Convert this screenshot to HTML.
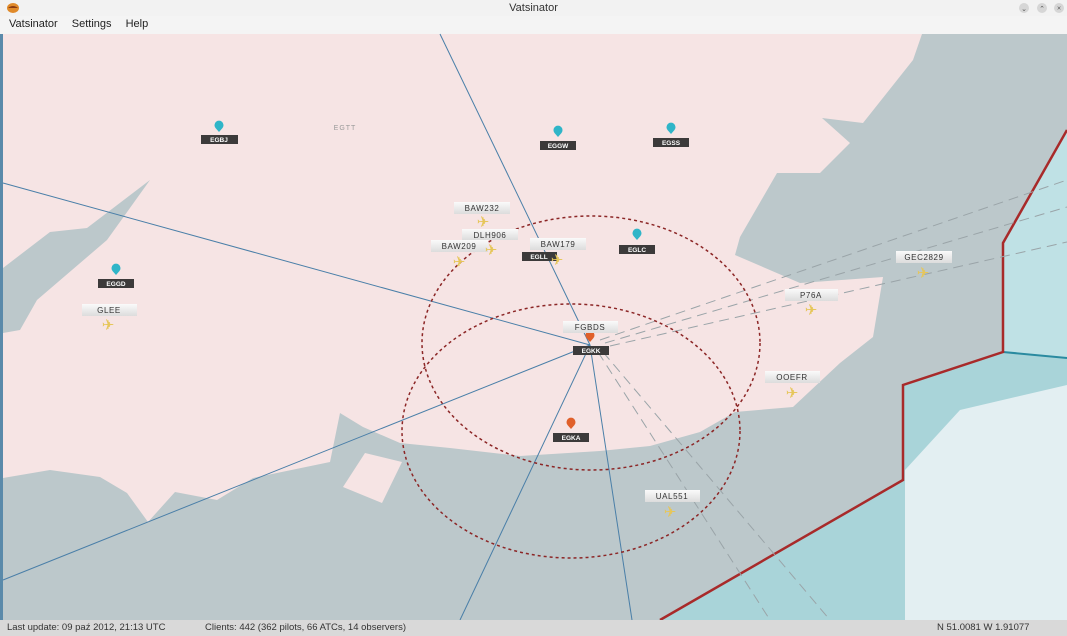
<!DOCTYPE html>
<html><head><meta charset="utf-8"><style>
html,body{margin:0;padding:0;width:1067px;height:636px;overflow:hidden;font-family:"Liberation Sans",sans-serif;background:#f0f0f0}
.title{position:absolute;left:0;top:0;width:1067px;height:16px;background:#f2f2f2;font-size:11px;color:#333;text-align:center;line-height:16px}
.menu{position:absolute;left:0;top:16px;width:1067px;height:18px;background:#f4f4f4;font-size:11px;color:#222;line-height:17px;border-bottom:1px solid #ddd}
.menu span{margin-left:9px;margin-right:2px}
.status{position:absolute;left:0;top:620px;width:1067px;height:16px;background:#d9d9d9;font-size:9.5px;color:#333;line-height:16px}
.status span{position:absolute;top:0}
svg{position:absolute;left:0;top:0}
</style></head><body>
<div class="title">Vatsinator</div>
<div class="menu"><span>Vatsinator</span> <span>Settings</span> <span>Help</span></div>
<svg width="1067" height="636" viewBox="0 0 1067 636" xmlns="http://www.w3.org/2000/svg" font-family="Liberation Sans, sans-serif">
<defs>
<linearGradient id="lg" x1="0" y1="0" x2="0" y2="1"><stop offset="0" stop-color="#fafafa"/><stop offset="1" stop-color="#dcdcdc"/></linearGradient>
<path id="pin" d="M0,5 L-3.5,1 A4.5,4.5 0 1 1 3.5,1 Z"/>
</defs>
<ellipse cx="13" cy="8" rx="6" ry="5" fill="#e08a2a"/><path d="M8 8 Q13 4 18 8" fill="#8a3a10"/>
<g fill="#d6d6d6"><circle cx="1024" cy="8" r="5"/><circle cx="1042" cy="8" r="5"/><circle cx="1059" cy="8" r="5"/></g>
<g font-size="7" fill="#555" text-anchor="middle"><text x="1024" y="11">⌄</text><text x="1042" y="11">⌃</text><text x="1059" y="10.5">×</text></g>
<rect x="0" y="34" width="1067" height="586" fill="#f6e4e4"/>
<path d="M922,34 L1067,34 L1067,620 L0,620 L3,478 L50,470 L100,477 L127,493 L148,522 L175,492 L217,500 L253,478 L330,462 L340,413 L363,427 L400,443 L450,448 L520,456 L600,451 L650,446 L700,432 L735,412 L793,407 L840,363 L873,337 L883,277 L800,283 L735,255 L740,237 L777,173 L820,173 L850,143 L822,118 L863,123 L913,60 Z" fill="#bcc8cb"/>
<path d="M343,487 L365,453 L402,462 L382,503 Z" fill="#f6e4e4"/>
<path d="M3,268 L50,232 L87,228 L150,180 L107,240 L37,300 L20,330 L3,333 Z" fill="#bcc8cb"/>
<path d="M1067,130 L1003,243 L1003,352 L903,385 L903,480 L660,620 L1067,620 Z" fill="#a9d4d9"/>
<path d="M1067,130 L1003,243 L1003,352 L1067,358 Z" fill="#bfe1e5"/>
<path d="M905,470 L960,410 L1067,385 L1067,620 L905,620 Z" fill="#e3eff2"/>
<path d="M1003,352 L1067,358" stroke="#2a8aa0" stroke-width="2"/>
<path d="M1067,130 L1003,243 L1003,352 L903,385 L903,480 L660,620" fill="none" stroke="#a82a2a" stroke-width="2.5"/>
<rect x="0" y="34" width="3" height="586" fill="#5a8aaa"/>
<g stroke="#4a7fa8" stroke-width="1" fill="none">
<path d="M440,34 L590,345"/><path d="M3,183 L590,345"/><path d="M3,580 L590,345"/><path d="M590,345 L460,620"/><path d="M590,345 L632,620"/>
</g>
<g stroke="#9aa4a8" stroke-width="1" fill="none" stroke-dasharray="10,6">
<path d="M600,340 L1067,180"/><path d="M605,343 L1067,207"/><path d="M610,346 L1067,242"/>
<path d="M598,352 L770,620"/><path d="M603,352 L830,620"/>
</g>
<g stroke="#8c2626" stroke-width="1.5" fill="none" stroke-dasharray="3,3">
<ellipse cx="591" cy="343" rx="169" ry="127"/>
<ellipse cx="571" cy="431" rx="169" ry="127"/>
</g>
<text x="345" y="130" font-size="7" fill="#9a9a9a" text-anchor="middle" letter-spacing="1">EGTT</text>
<g font-size="6.5" fill="#fff" text-anchor="middle" font-weight="bold">
<g><use href="#pin" x="219" y="127" fill="#2fb5c8"/><rect x="201" y="135" width="37" height="9" fill="#3c3a3a"/><text x="219" y="142">EGBJ</text></g>
<g><use href="#pin" x="116" y="270" fill="#2fb5c8"/><rect x="98" y="279" width="36" height="9" fill="#3c3a3a"/><text x="116" y="286">EGGD</text></g>
<g><use href="#pin" x="558" y="132" fill="#2fb5c8"/><rect x="540" y="141" width="36" height="9" fill="#3c3a3a"/><text x="558" y="148">EGGW</text></g>
<g><use href="#pin" x="671" y="129" fill="#2fb5c8"/><rect x="653" y="138" width="36" height="9" fill="#3c3a3a"/><text x="671" y="145">EGSS</text></g>
<g><use href="#pin" x="637" y="235" fill="#2fb5c8"/><rect x="619" y="245" width="36" height="9" fill="#3c3a3a"/><text x="637" y="252">EGLC</text></g>
<g><use href="#pin" x="571" y="424" fill="#e0602a"/><rect x="553" y="433" width="36" height="9" fill="#3c3a3a"/><text x="571" y="440">EGKA</text></g>
<g><rect x="522" y="252" width="35" height="9" fill="#3c3a3a"/><text x="539" y="259">EGLL</text></g>
<g><use href="#pin" x="590" y="337" fill="#e0602a"/><rect x="573" y="346" width="36" height="9" fill="#3c3a3a"/><text x="591" y="353">EGKK</text></g>
</g>
<g font-size="8" fill="#333" text-anchor="middle" letter-spacing="0.6">
<g><rect x="454" y="202" width="56" height="12" fill="url(#lg)"/><text x="482" y="211">BAW232</text></g>
<g><rect x="462" y="229" width="56" height="11" fill="url(#lg)"/><text x="490" y="238">DLH906</text></g>
<g><rect x="431" y="240" width="57" height="12" fill="url(#lg)"/><text x="459" y="249">BAW209</text></g>
<g><rect x="530" y="238" width="56" height="12" fill="url(#lg)"/><text x="558" y="247">BAW179</text></g>
<g><rect x="563" y="321" width="55" height="12" fill="url(#lg)"/><text x="590" y="330">FGBDS</text></g>
<g><rect x="82" y="304" width="55" height="12" fill="url(#lg)"/><text x="109" y="313">GLEE</text></g>
<g><rect x="785" y="289" width="53" height="12" fill="url(#lg)"/><text x="811" y="298">P76A</text></g>
<g><rect x="896" y="251" width="56" height="12" fill="url(#lg)"/><text x="924" y="260">GEC2829</text></g>
<g><rect x="765" y="371" width="55" height="12" fill="url(#lg)"/><text x="792" y="380">OOEFR</text></g>
<g><rect x="645" y="490" width="55" height="12" fill="url(#lg)"/><text x="672" y="499">UAL551</text></g>
</g>
<g font-size="15" fill="#e6c65a" text-anchor="middle">
<text x="483" y="227">✈</text><text x="491" y="255">✈</text><text x="459" y="267">✈</text><text x="557" y="265">✈</text>
<text x="108" y="330">✈</text><text x="811" y="315">✈</text><text x="923" y="278">✈</text><text x="792" y="398">✈</text><text x="670" y="517">✈</text>
</g>
</svg>
<div class="status"><span style="left:7px">Last update: 09 paź 2012, 21:13 UTC</span><span style="left:205px">Clients: 442 (362 pilots, 66 ATCs, 14 observers)</span><span style="left:937px">N 51.0081 W 1.91077</span></div>
</body></html>
